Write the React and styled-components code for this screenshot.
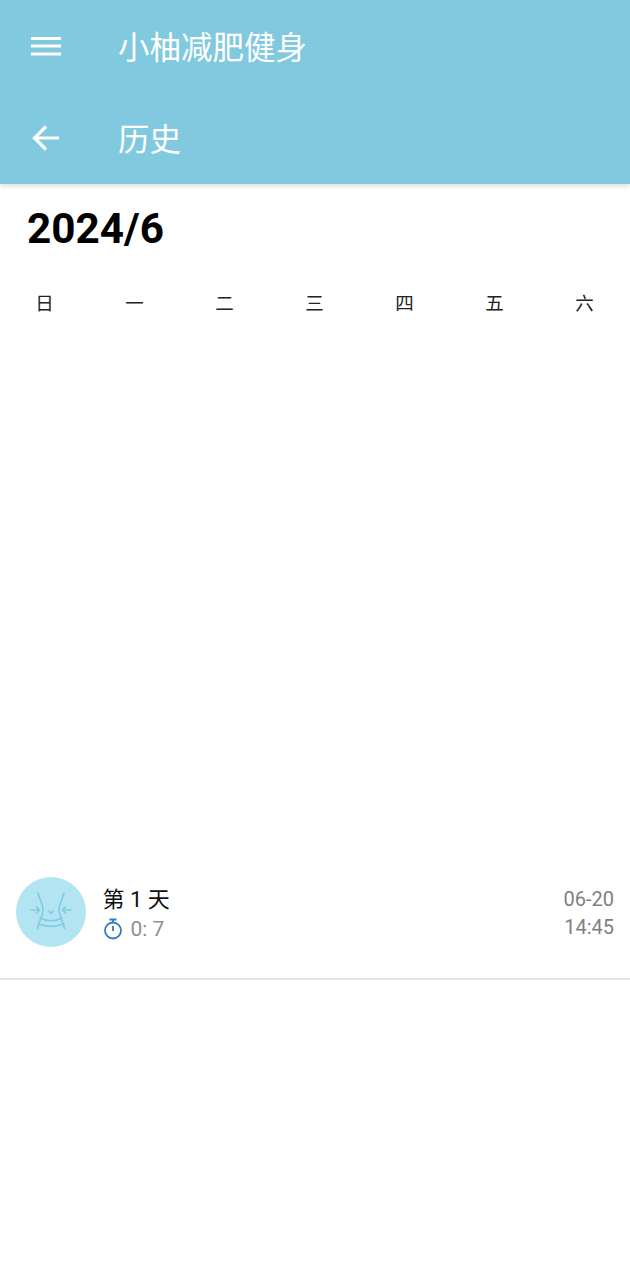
import React from "react";
import styled, { createGlobalStyle } from "styled-components";

const Global = createGlobalStyle`
  html, body { margin: 0; padding: 0; background: #fff; }
  body { font-family: Roboto, "Noto Sans CJK SC", sans-serif; }
`;
const Page = styled.div`
  width: 630px; height: 1280px; background: #fff; overflow: hidden;
  display: flex; flex-direction: column;
`;
const Header = styled.header`
  background: #80c9df; height: 184px; flex: none;
  box-shadow: 0 2px 5px rgba(0,0,0,0.14);
  display: flex; flex-direction: column;
`;
const Bar = styled.div`
  height: 92px; display: flex; align-items: center; padding-left: 22px;
  color: #fff;
`;
const IconSlot = styled.div`
  width: 48px; height: 48px; display: flex; align-items: center; justify-content: center;
  margin-right: 48px; flex: none;
`;
const BarTitle = styled.div`
  font-family: "Noto Sans CJK SC", sans-serif;
  font-size: 31.5px; line-height: 38px; color: #fff; font-weight: 400;
  margin-bottom: 2px;
`;
const Month = styled.h1`
  margin: 0; padding: 24px 0 0 27px;
  font: 700 42.3px/42px Roboto, sans-serif; color: #000;
  height: 42px;
`;
const Week = styled.div`
  display: grid; grid-template-columns: repeat(7, 90px);
  margin-top: 40px;
`;
const Day = styled.div`
  font-family: "Noto Sans CJK SC", sans-serif;
  font-size: 18.5px; line-height: 24px; color: #222; text-align: center;
  font-weight: 400;
  margin-right: 1px;
`;
const Spacer = styled.div`height: 563px; flex: none;`;
const Row = styled.div`
  height: 101px; display: flex; align-items: flex-start; padding: 0 16px;
  border-bottom: 2px solid #e3e3e3; flex: none;
`;
const Avatar = styled.div`
  width: 70px; height: 70px; border-radius: 50%; background: #b3e4f1;
  display: flex; align-items: center; justify-content: center; flex: none;
`;
const Info = styled.div`
  margin-left: 16.5px; display: flex; flex-direction: column; padding-top: 8px;
`;
const RowTitle = styled.div`
  font-family: Roboto, "Noto Sans CJK SC", sans-serif;
  font-size: 22px; line-height: 29px; color: #111;
  white-space: pre;
`;
const Duration = styled.div`
  display: flex; align-items: center; gap: 8px;
  font-size: 21px; line-height: 26px; color: #8f8f8f; margin-top: 2px;
`;
const When = styled.div`
  margin-left: auto; text-align: right; color: #808080;
  font-size: 20px; line-height: 28px; padding-top: 8px;
`;

export default function App() {
  return (
    <Page>
      <Global />
      <Header>
        <Bar>
          <IconSlot>
            <svg width="32" height="24" viewBox="0 0 32 24">
              <path d="M1 4.5h30M1 12h30M1 20h30" stroke="#fff" strokeWidth="3" fill="none" />
            </svg>
          </IconSlot>
          <BarTitle>小柚减肥健身</BarTitle>
        </Bar>
        <Bar>
          <IconSlot>
            <svg width="30" height="28" viewBox="0 0 30 28">
              <path d="M28 14H4M15 2.5 3.5 14 15 25.5" stroke="#fff" strokeWidth="3.2" fill="none" />
            </svg>
          </IconSlot>
          <BarTitle>历史</BarTitle>
        </Bar>
      </Header>
      <Month>2024/6</Month>
      <Week>
        {["日", "一", "二", "三", "四", "五", "六"].map(d => <Day key={d}>{d}</Day>)}
      </Week>
      <Spacer />
      <Row>
        <Avatar>
          <svg width="44" height="44" viewBox="0 0 44 44" fill="none" stroke="#7fcbe3" strokeWidth="1.6" strokeLinecap="round">
            <path d="M9 3c2 7 5 12 5 16.5 0 6-4 12-5.500 19" />
            <path d="M35 3c-2 7-5 12-5 16.5 0 6 4 12 5.500 19" />
            <path d="M11 28c7 3.500 15 3.500 22 0M9.500 34c8 3 17 3 25 0" />
            <path d="M2 20h8M7.500 17l3 3-3 3M42 20h-8M36.500 17l-3 3 3 3" />
            <path d="M20 21c1 1.500 1.500 2 2 2.500.5-.5 1-1 2-2.500" />
          </svg>
        </Avatar>
        <Info>
          <RowTitle>第 1 天</RowTitle>
          <Duration>
            <svg width="20" height="22" viewBox="0 0 20 22" fill="none" stroke="#2f7cc0" strokeWidth="1.8">
              <circle cx="10" cy="12.5" r="8" />
              <path d="M6.500 1.500h7M10 1.500v3M10 8v5" />
            </svg>
            <span>0: 7</span>
          </Duration>
        </Info>
        <When>06-20<br />14:45</When>
      </Row>
    </Page>
  );
}
